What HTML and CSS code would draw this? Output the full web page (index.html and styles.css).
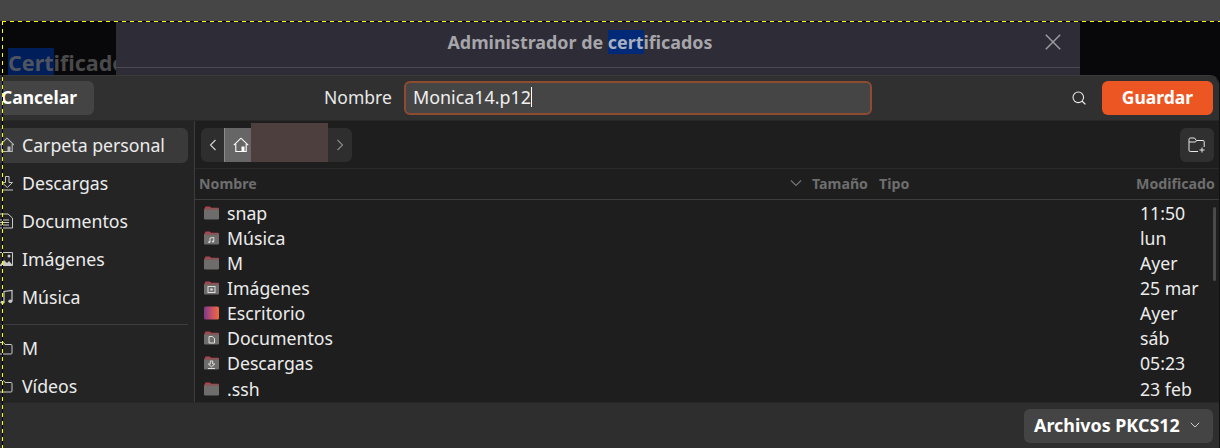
FILE: index.html
```html
<!DOCTYPE html>
<html lang="es">
<head>
<meta charset="utf-8">
<title>Guardar</title>
<link rel="stylesheet" href="styles.css">
</head>
<body>
<svg class="defs" width="0" height="0" aria-hidden="true">
  <defs>
    <symbol id="folder" viewBox="0 0 15 14">
      <path d="M1 3V1.600C1 .9 1.500.5 2.100.5h3.200c.6 0 .9.2 1.200.6l.6.7h6.700c.7 0 1.200.5 1.200 1.200V4H1z" fill="#b0414f"/>
      <rect x="0" y="2.600" width="15" height="11" rx="1.400" fill="#6f6c6c"/>
      <rect x="0" y="2.600" width="15" height="1" fill="#8d4c4c"/>
    </symbol>
    <symbol id="side-folder" viewBox="0 0 14 14">
      <path d="M-2 1.500h5.500l1.500 2h6a1 1 0 0 1 1 1V12a1 1 0 0 1-1 1H-2" fill="none" stroke="#c8c8c8" stroke-width="1"/>
    </symbol>
    <symbol id="home" viewBox="0 0 16 16">
      <path d="M.8 8.200 8 1.200l7.200 7" fill="none" stroke="currentColor" stroke-width="1.100"/>
      <path d="M2.800 7v7.500h10.400V7" fill="none" stroke="currentColor" stroke-width="1.100"/>
      <rect x="8.500" y="9.500" width="3" height="5" fill="currentColor"/>
    </symbol>
    <linearGradient id="desk" x1="0" x2="1" y1="0" y2="0">
      <stop offset="0" stop-color="#7b3a86"/><stop offset=".5" stop-color="#c4506a"/><stop offset="1" stop-color="#f0693a"/>
    </linearGradient>
  </defs>
</svg>
<div class="screen">
  <div class="topstrip"></div>
  <div class="backdrop">
    <div class="back-left"><span class="back-title"><mark class="hl-dark">Cert</mark>ificados</span></div>
    <div class="back-dialog">
      <div class="back-head">
        <span class="back-head-title">Administrador de <mark class="hl">cert</mark>ificados</span>
        <svg class="close" width="16" height="16" viewBox="0 0 16 16"><path d="M.8.8l14.400 14.400M15.200.8.8 15.200" stroke="#a0a0a4" stroke-width="1.400" fill="none"/></svg>
      </div>
    </div>
    <div class="back-right"></div>
  </div>
  <main class="window">
    <header class="head">
      <button class="btn cancel">Cancelar</button>
      <label class="name-label">Nombre</label>
      <div class="entry"><span class="entry-text">Monica14.p12</span><span class="caret"></span></div>
      <svg class="search" width="16" height="16" viewBox="0 0 16 16"><circle cx="7.300" cy="7.300" r="5.300" fill="none" stroke="#e8e8e8" stroke-width="1.100"/><path d="M11.200 11.200l3.200 3.200" stroke="#e8e8e8" stroke-width="1.300"/></svg>
      <button class="btn save">Guardar</button>
    </header>
    <div class="body">
      <nav class="sidebar">
        <div class="place selected"><svg class="place-icon" viewBox="0 0 14 16"><use href="#home" x="-1" width="16" height="16" color="#bdbdbd"/></svg><span>Carpeta personal</span></div>
        <div class="place"><svg class="place-icon" viewBox="0 0 14 16"><path d="M5.500 1.500h3.500v6H12.500L7.300 12.500 2 7.500H5.500zM2 15h11" fill="none" stroke="#c8c8c8"/></svg><span>Descargas</span></div>
        <div class="place"><svg class="place-icon" viewBox="0 0 14 16"><path d="M0 1h8l4.500 4v10H0" fill="none" stroke="#c8c8c8"/><path d="M0 7h9M0 9.500h9M0 12h9" stroke="#c8c8c8"/></svg><span>Documentos</span></div>
        <div class="place"><svg class="place-icon" viewBox="0 0 14 16"><path d="M0 1.500h12.500v13H0" fill="none" stroke="#c8c8c8"/><path d="M0 14l4-5 3 3 2-2 3.500 4z" fill="#c8c8c8"/><circle cx="9" cy="5" r="1.500" fill="#c8c8c8"/></svg><span>Imágenes</span></div>
        <div class="place"><svg class="place-icon" viewBox="0 0 14 16"><path d="M4 13V2.500l8-1V12" fill="none" stroke="#c8c8c8" stroke-width="1.200"/><ellipse cx="2.500" cy="13.300" rx="2" ry="1.700" fill="#c8c8c8"/><ellipse cx="10.300" cy="12.300" rx="2" ry="1.700" fill="#c8c8c8"/></svg><span>Música</span></div>
        <hr class="side-sep">
        <div class="place"><svg class="place-icon" viewBox="0 0 14 14"><use href="#side-folder"/></svg><span>M</span></div>
        <div class="place"><svg class="place-icon" viewBox="0 0 14 14"><use href="#side-folder"/></svg><span>Vídeos</span></div>
      </nav>
      <section class="content">
        <div class="pathrow">
          <div class="pathbar">
            <span class="path-btn"><svg width="8" height="12" viewBox="0 0 8 12"><path d="M6.500 1 1.500 6l5 5" fill="none" stroke="#d8d8d8" stroke-width="1.100"/></svg></span>
            <span class="path-home"><svg width="16" height="16"><use href="#home" color="#fff"/></svg></span>
            <span class="path-redact"></span>
            <span class="path-btn"><svg width="8" height="12" viewBox="0 0 8 12"><path d="M1.500 1l5 5-5 5" fill="none" stroke="#8a8a8a" stroke-width="1.100"/></svg></span>
          </div>
          <button class="newfolder"><svg width="18" height="16" viewBox="0 0 18 16"><path d="M10 14.500H2.200A1.200 1.200 0 0 1 1 13.300V2.200C1 1.500 1.500 1 2.200 1h4.300l1.800 2.500H15a1.200 1.200 0 0 1 1.200 1.200V10M1 5h6.500l1-1.500" fill="none" stroke="#e6e6e6"/><path d="M14 10.500v5M11.500 13h5" stroke="#e6e6e6"/></svg></button>
        </div>
        <div class="cols">
          <span class="col-name">Nombre</span>
          <svg class="sort" width="12" height="8" viewBox="0 0 12 8"><path d="M1 1.500l5 5 5-5" fill="none" stroke="#777" stroke-width="1.100"/></svg>
          <span class="col-size">Tamaño</span>
          <span class="col-type">Tipo</span>
          <span class="col-mod">Modificado</span>
        </div>
        <ul class="files">
          <li class="file"><svg class="ficon"><use href="#folder"/></svg><span class="fname">snap</span><span class="fmod">11:50</span></li>
          <li class="file"><svg class="ficon" viewBox="0 0 15 14"><use href="#folder"/><path d="M6 11V7l3.800-.6V10.500" fill="none" stroke="#ddd"/><circle cx="5.300" cy="11" r="1.100" fill="#ddd"/><circle cx="9" cy="10.500" r="1.100" fill="#ddd"/></svg><span class="fname">Música</span><span class="fmod">lun</span></li>
          <li class="file"><svg class="ficon"><use href="#folder"/></svg><span class="fname">M</span><span class="fmod">Ayer</span></li>
          <li class="file"><svg class="ficon" viewBox="0 0 15 14"><use href="#folder"/><rect x="4" y="5.500" width="7" height="6" fill="none" stroke="#ddd"/><rect x="6.300" y="7.500" width="2.400" height="2" fill="#ddd"/></svg><span class="fname">Imágenes</span><span class="fmod">25 mar</span></li>
          <li class="file"><svg class="ficon" viewBox="0 0 15 14"><rect width="15" height="13" y=".5" rx="1.500" fill="url(#desk)"/></svg><span class="fname">Escritorio</span><span class="fmod">Ayer</span></li>
          <li class="file"><svg class="ficon" viewBox="0 0 15 14"><use href="#folder"/><path d="M5 5.500h3.200L10.500 7.500v4.500H5z" fill="none" stroke="#ddd"/></svg><span class="fname">Documentos</span><span class="fmod">sáb</span></li>
          <li class="file"><svg class="ficon" viewBox="0 0 15 14"><use href="#folder"/><path d="M6.300 5h2.400v3h2L7.500 10.800 4.300 8h2zM4 12.500h7" fill="none" stroke="#ddd"/></svg><span class="fname">Descargas</span><span class="fmod">05:23</span></li>
          <li class="file"><svg class="ficon"><use href="#folder"/></svg><span class="fname">.ssh</span><span class="fmod">23 feb</span></li>
        </ul>
        <div class="scrollbar"></div>
      </section>
    </div>
    <footer class="foot">
      <button class="btn filter">Archivos PKCS12<svg class="filter-arrow" width="10" height="6" viewBox="0 0 10 6"><path d="M.8.8 5 5 9.200.8" fill="none" stroke="#cfcfcf"/></svg></button>
    </footer>
  </main>
  <div class="ants-h"></div>
  <div class="ants-v"></div>
</div>
</body>
</html>
```
FILE: styles.css
```css
* { box-sizing: border-box; }
html, body { margin: 0; padding: 0; background: #2e2e2e; }
body { width: 1220px; height: 448px; overflow: hidden; font-family: "Noto Sans", sans-serif; }
.defs { position: absolute; }
.screen { position: relative; width: 1220px; height: 448px; overflow: hidden; display: flex; flex-direction: column; background: #08080b; }
.topstrip { height: 21px; flex: none; background: #464646; }

.backdrop { height: 54px; flex: none; display: flex; }
.back-left { width: 116px; flex: none; overflow: hidden; white-space: nowrap; padding: 29px 0 0 8px; background: #08080b; }
.back-title { font-size: 21.500px; line-height: 25px; font-weight: 700; color: #4a4a4a; }
.hl-dark { background: #001e5a; color: #4f5560; }
.back-dialog { width: 964px; flex: none; background: #2d2c37; }
.back-head { height: 47px; border-bottom: 1px solid #4a4a52; display: flex; align-items: center; justify-content: center; position: relative; padding: 0 36px 4px 0; }
.back-head-title { font-size: 17.900px; font-weight: 700; color: #a6a6aa; line-height: 22px; }
.hl { background: #002a78; color: #a9b0c0; }
.close { position: absolute; right: 19px; top: 13px; }
.back-right { flex: 1; background: #08080b; }

.window { flex: 1; min-height: 0; display: flex; flex-direction: column; background: #1e1e1e; border-top: 1px solid #3a3a3a; border-right: 1px solid #111; border-top-right-radius: 10px; overflow: hidden; color: #f0f0f0; }
.head { height: 45px; flex: none; background: #303030; display: flex; align-items: center; padding: 0 6px 0 0; border-bottom: 1px solid #272727; }
.btn { font-family: inherit; border: 0; border-radius: 6px; height: 34px; font-weight: 700; font-size: 17.500px; color: #fff; padding: 0 0 2px; }
.cancel { width: 94px; background: #444; text-align: left; padding-left: 1px; border-radius: 0 6px 6px 0; }
.name-label { margin-left: 230px; width: 68px; font-size: 17.500px; color: #e8e8e8; white-space: nowrap; padding-bottom: 2px; }
.entry { margin-left: 12px; width: 468px; height: 34px; border: 2px solid #8f4a32; border-radius: 6px; background: #454545; display: flex; align-items: center; padding: 0 0 2px 7px; font-size: 17.900px; }
.caret { width: 1px; height: 20px; background: #fff; margin-left: 0; }
.search { margin-left: 199px; }
.save { margin-left: 15px; width: 111px; background: #ec5622; }

.body { flex: 1; min-height: 0; display: flex; }
.sidebar { width: 195px; flex: none; background: #242424; border-right: 1px solid #3c3c3c; padding: 7px 6px 0 0; overflow: hidden; }
.place { height: 35px; margin-bottom: 3px; padding-bottom: 2px; display: flex; align-items: center; border-radius: 0 6px 6px 0; font-size: 17.700px; color: #ececec; white-space: nowrap; }
.place.selected { background: #3a3a3a; }
.place-icon { width: 14px; height: 16px; flex: none; margin: 0 8px 0 0; }
.side-sep { border: 0; height: 1px; background: #3c3c3c; margin: 9px 0 6px; }

.content { flex: 1; min-width: 0; display: flex; flex-direction: column; position: relative; }
.pathrow { height: 48px; flex: none; display: flex; align-items: flex-start; justify-content: space-between; padding: 7px 5px 0 6px; border-bottom: 1px solid #2a2a2a; }
.pathbar { width: 151px; height: 34px; display: flex; background: #2e2e2e; border-radius: 6px; }
.path-btn { width: 23px; display: flex; align-items: center; justify-content: center; }
.path-btn:last-child { width: 24px; }
.path-home { width: 27px; background: #666; border-left: 1px solid #8a8a8a; display: flex; align-items: center; padding-left: 8px; }
.path-redact { width: 77px; height: 39px; margin-top: -5px; background: #4c3f3d; }
.newfolder { width: 34px; height: 34px; border: 0; border-radius: 6px; background: #303030; padding: 0; display: flex; align-items: center; justify-content: center; }

.cols { height: 31px; flex: none; border-bottom: 1px solid #3c3c3c; display: flex; align-items: center; font-size: 14.200px; font-weight: 700; color: #6e6e6e; padding: 0 4px 2px; white-space: nowrap; }
.col-name { width: 591px; }
.sort { width: 12px; flex: none; }
.col-size { margin-left: 10px; width: 67px; }
.col-type { width: 257px; }
.col-mod { flex: none; }

.files { list-style: none; margin: 0; padding: 0; flex: 1; overflow: hidden; }
.file { height: 25.150px; display: grid; grid-template-columns: 15px 1fr 79px; align-items: center; padding-left: 9px; font-size: 17.700px; color: #ececec; }
.ficon { width: 15px; height: 14px; }
.fname { padding-left: 8px; }
.fmod { padding-left: 0; }
.scrollbar { position: absolute; left: 1018px; top: 86px; width: 3px; height: 74px; border-radius: 2px; background: #4a4a4a; }

.foot { height: 46px; flex: none; background: #2e2e2e; border-top: 1px solid #272727; display: flex; justify-content: flex-end; align-items: center; padding-right: 6px; }
.filter { width: 189px; background: #444; display: flex; align-items: center; justify-content: space-between; padding: 0 13px 2px 10px; font-size: 17.900px; }

.ants-h { position: absolute; left: 2px; right: 0; top: 21px; height: 1px; background: repeating-linear-gradient(90deg, #ffff00 0 4px, #000 4px 8px); }
.ants-v { position: absolute; left: 2px; top: 21px; bottom: 0; width: 1px; background: repeating-linear-gradient(180deg, #ffff00 0 4px, #000 4px 8px); }
```
